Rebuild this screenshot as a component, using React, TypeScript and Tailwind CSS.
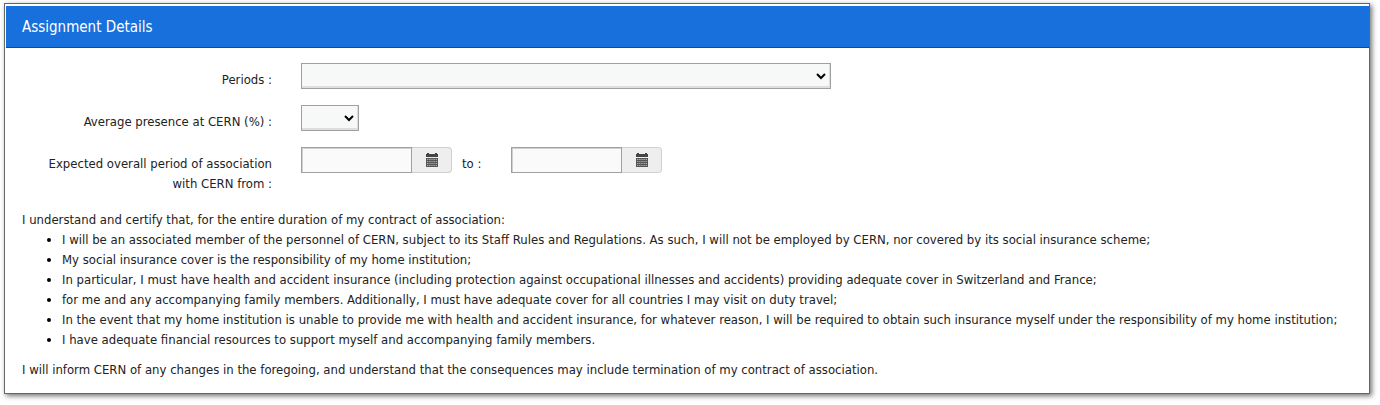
import React from 'react';

const conditions = [
    'I will be an associated member of the personnel of CERN, subject to its Staff Rules and Regulations. As such, I will not be employed by CERN, nor covered by its social insurance scheme;',
    'My social insurance cover is the responsibility of my home institution;',
    'In particular, I must have health and accident insurance (including protection against occupational illnesses and accidents) providing adequate cover in Switzerland and France;',
    'for me and any accompanying family members. Additionally, I must have adequate cover for all countries I may visit on duty travel;',
    'In the event that my home institution is unable to provide me with health and accident insurance, for whatever reason, I will be required to obtain such insurance myself under the responsibility of my home institution;',
    'I have adequate financial resources to support myself and accompanying family members.',
];

function CalendarIcon() {
    return (
        <svg viewBox="0 0 14 14" className="h-[14px] w-[14px]" aria-hidden="true">
            <path d="M2 0h2v1h6V0h2v1h1v3H1V1h1z" fill="#444" />
            <path d="M1 5h12v9H1z" fill="#555" />
            <path
                d="M2 6.5h10M2 8.5h10M2 10.5h10M2 12.5h10"
                stroke="#aaa"
                strokeWidth="1"
                strokeDasharray="1.4 0.75"
            />
        </svg>
    );
}

function SelectField({ id, className }: { id: string; className: string }) {
    return (
        <div className={`relative ${className}`}>
            <select
                id={id}
                className="block h-[26px] w-full appearance-none border border-[#a0a0a0] bg-[#f7f8f8] px-2 shadow-[inset_-1px_-2px_0_#dedede]"
            >
                <option value=""></option>
            </select>
            <svg viewBox="0 0 10 7" className="pointer-events-none absolute top-[10px] right-[5px] h-[7px] w-[10px]" aria-hidden="true">
                <path d="M1 1l4 4 4-4" fill="none" stroke="#000" strokeWidth="2" />
            </svg>
        </div>
    );
}

function DateField({ id, label }: { id: string; label: string }) {
    return (
        <div className="flex h-[26px] w-[151px]">
            <input
                id={id}
                type="text"
                aria-label={label}
                className="w-[111px] border border-[#a0a0a0] bg-[#fafafa] px-2 shadow-[inset_1px_1px_0_#d0d0d0]"
            />
            <button
                type="button"
                aria-label={`Choose ${label}`}
                className="flex flex-1 items-center justify-center rounded-r border border-l-0 border-[#d0d0d0] bg-[#eeeeee]"
            >
                <CalendarIcon />
            </button>
        </div>
    );
}

const labelClass = 'w-[250px] shrink-0 pt-[7px] pl-4 text-right';

export default function App() {
    return (
        <main className="bg-white pt-[3px] pr-[10px] pb-[10px] pl-1 font-['DejaVu_Sans_Condensed','Open_Sans',sans-serif] text-[13px] leading-5 text-[#222]">
            <section className="border border-[#666] bg-white pt-[2px] pl-px shadow-[2px_2px_5px_rgba(0,0,0,0.55)]">
                <h1 className="flex h-[42px] items-center border-b border-[#0b4a9c] bg-[#1770dc] px-4 text-[15px] text-white">
                    Assignment Details
                </h1>

                <form className="flex flex-col gap-4 pt-[15px] pl-4">
                    <div className="flex h-[26px] gap-[29px]">
                        <label htmlFor="periods" className={labelClass}>Periods :</label>
                        <SelectField id="periods" className="w-[530px]" />
                    </div>
                    <div className="flex h-[26px] gap-[29px]">
                        <label htmlFor="presence" className={labelClass}>Average presence at CERN (%) :</label>
                        <SelectField id="presence" className="w-[58px]" />
                    </div>
                    <div className="flex gap-[29px]">
                        <label htmlFor="from" className={labelClass}>
                            Expected overall period of association with CERN from :
                        </label>
                        <div className="flex">
                            <DateField id="from" label="start date" />
                            <label htmlFor="to" className="w-[59px] pt-[7px] pl-[10px]">to :</label>
                            <DateField id="to" label="end date" />
                        </div>
                    </div>
                </form>

                <div className="pt-4 pb-[13px] pl-4">
                    <p>I understand and certify that, for the entire duration of my contract of association:</p>
                    <ul className="list-disc pl-10 marker:text-black">
                        {conditions.map((text) => (
                            <li key={text}>{text}</li>
                        ))}
                    </ul>
                    <p className="pt-[10px]">
                        I will inform CERN of any changes in the foregoing, and understand that the consequences may include termination of my contract of association.
                    </p>
                </div>
            </section>
        </main>
    );
}
